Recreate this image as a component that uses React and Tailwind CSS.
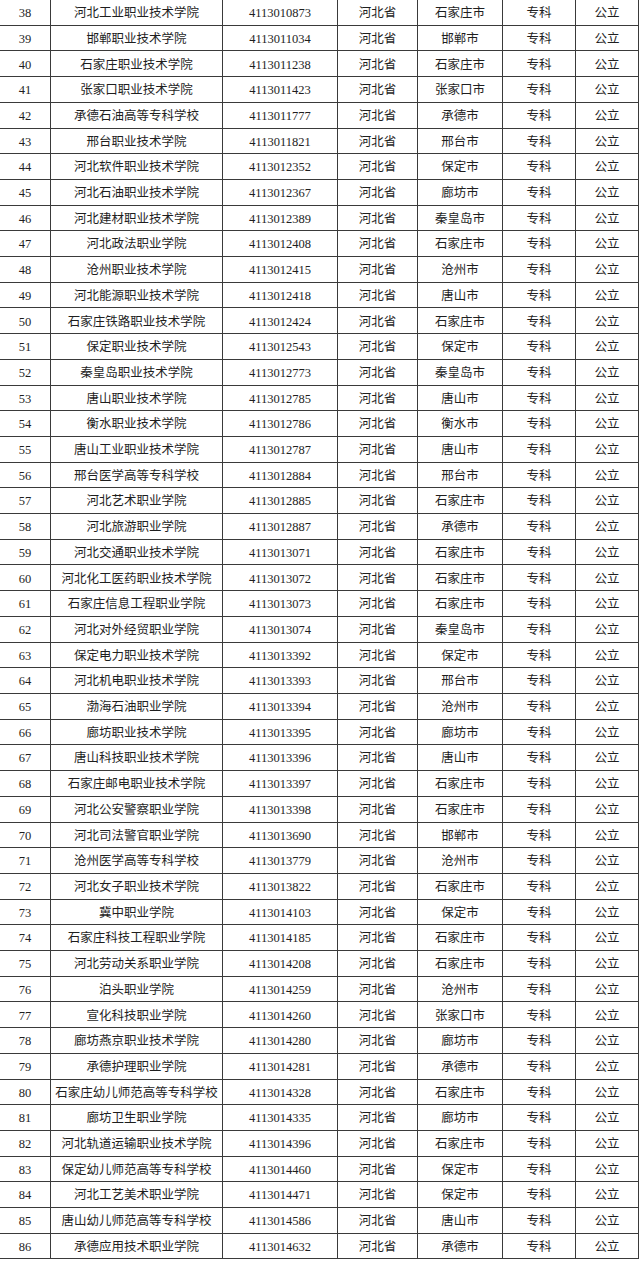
const rows = [
  ["38", "河北工业职业技术学院", "4113010873", "石家庄市"],
  ["39", "邯郸职业技术学院", "4113011034", "邯郸市"],
  ["40", "石家庄职业技术学院", "4113011238", "石家庄市"],
  ["41", "张家口职业技术学院", "4113011423", "张家口市"],
  ["42", "承德石油高等专科学校", "4113011777", "承德市"],
  ["43", "邢台职业技术学院", "4113011821", "邢台市"],
  ["44", "河北软件职业技术学院", "4113012352", "保定市"],
  ["45", "河北石油职业技术学院", "4113012367", "廊坊市"],
  ["46", "河北建材职业技术学院", "4113012389", "秦皇岛市"],
  ["47", "河北政法职业学院", "4113012408", "石家庄市"],
  ["48", "沧州职业技术学院", "4113012415", "沧州市"],
  ["49", "河北能源职业技术学院", "4113012418", "唐山市"],
  ["50", "石家庄铁路职业技术学院", "4113012424", "石家庄市"],
  ["51", "保定职业技术学院", "4113012543", "保定市"],
  ["52", "秦皇岛职业技术学院", "4113012773", "秦皇岛市"],
  ["53", "唐山职业技术学院", "4113012785", "唐山市"],
  ["54", "衡水职业技术学院", "4113012786", "衡水市"],
  ["55", "唐山工业职业技术学院", "4113012787", "唐山市"],
  ["56", "邢台医学高等专科学校", "4113012884", "邢台市"],
  ["57", "河北艺术职业学院", "4113012885", "石家庄市"],
  ["58", "河北旅游职业学院", "4113012887", "承德市"],
  ["59", "河北交通职业技术学院", "4113013071", "石家庄市"],
  ["60", "河北化工医药职业技术学院", "4113013072", "石家庄市"],
  ["61", "石家庄信息工程职业学院", "4113013073", "石家庄市"],
  ["62", "河北对外经贸职业学院", "4113013074", "秦皇岛市"],
  ["63", "保定电力职业技术学院", "4113013392", "保定市"],
  ["64", "河北机电职业技术学院", "4113013393", "邢台市"],
  ["65", "渤海石油职业学院", "4113013394", "沧州市"],
  ["66", "廊坊职业技术学院", "4113013395", "廊坊市"],
  ["67", "唐山科技职业技术学院", "4113013396", "唐山市"],
  ["68", "石家庄邮电职业技术学院", "4113013397", "石家庄市"],
  ["69", "河北公安警察职业学院", "4113013398", "石家庄市"],
  ["70", "河北司法警官职业学院", "4113013690", "邯郸市"],
  ["71", "沧州医学高等专科学校", "4113013779", "沧州市"],
  ["72", "河北女子职业技术学院", "4113013822", "石家庄市"],
  ["73", "冀中职业学院", "4113014103", "保定市"],
  ["74", "石家庄科技工程职业学院", "4113014185", "石家庄市"],
  ["75", "河北劳动关系职业学院", "4113014208", "石家庄市"],
  ["76", "泊头职业学院", "4113014259", "沧州市"],
  ["77", "宣化科技职业学院", "4113014260", "张家口市"],
  ["78", "廊坊燕京职业技术学院", "4113014280", "廊坊市"],
  ["79", "承德护理职业学院", "4113014281", "承德市"],
  ["80", "石家庄幼儿师范高等专科学校", "4113014328", "石家庄市"],
  ["81", "廊坊卫生职业学院", "4113014335", "廊坊市"],
  ["82", "河北轨道运输职业技术学院", "4113014396", "石家庄市"],
  ["83", "保定幼儿师范高等专科学校", "4113014460", "保定市"],
  ["84", "河北工艺美术职业学院", "4113014471", "保定市"],
  ["85", "唐山幼儿师范高等专科学校", "4113014586", "唐山市"],
  ["86", "承德应用技术职业学院", "4113014632", "承德市"],
];

function Cell({ children }) {
  return (
    <div className="flex items-center justify-center border-r border-b border-[#3a3a3a] pt-[2px] whitespace-nowrap">
      {children}
    </div>
  );
}

export default function App() {
  return (
    <div
      className="w-[640px] bg-white text-[#1e1e1e] text-[12.5px] leading-none"
      style={{ fontFamily: '"Liberation Serif", "Noto Sans CJK SC", serif' }}
    >
      {rows.map(([no, name, code, city]) => (
        <div
          key={no}
          className="grid h-[25.714px] grid-cols-[51px_172px_115px_80px_85px_73px_63px]"
        >
          <Cell>{no}</Cell>
          <Cell>{name}</Cell>
          <Cell>{code}</Cell>
          <Cell>河北省</Cell>
          <Cell>{city}</Cell>
          <Cell>专科</Cell>
          <Cell>公立</Cell>
        </div>
      ))}
    </div>
  );
}
